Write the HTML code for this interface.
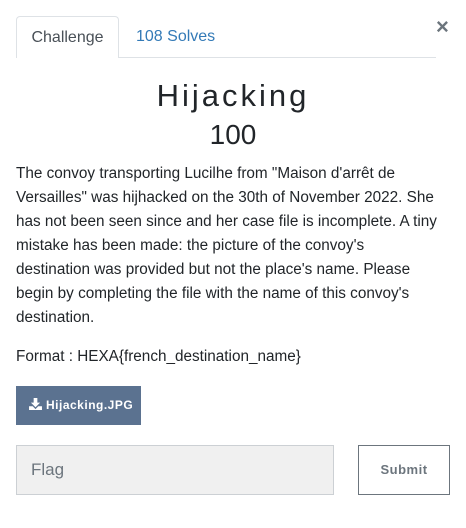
<!DOCTYPE html>
<html><head><style>
body{margin:0;width:466px;height:528px;background:#fff;font-family:"Liberation Sans",sans-serif;color:#212529;position:relative;overflow:hidden}
.tab{position:absolute;top:16px;height:41px;font-size:16px;line-height:41px;box-sizing:border-box}
.t1{left:16px;width:103px;border:1px solid #dee2e6;border-bottom:none;border-radius:4px 4px 0 0;text-align:center;color:#495057;background:#fff;z-index:2;height:42px}
.t2{left:136px;color:#337ab7}
.line{position:absolute;left:16px;width:420px;top:57px;border-top:1px solid #dee2e6}
.x{position:absolute;left:436px;top:14px;font-size:22px;color:#6c757d;font-weight:bold}
h1{position:absolute;top:76px;left:0;width:466px;text-align:center;margin:0;font-weight:normal;font-size:31px;letter-spacing:3px;line-height:40px}
.pts{position:absolute;top:118px;left:0;width:466px;text-align:center;font-size:28px;line-height:34px}
.d{position:absolute;left:16px;top:162px;width:450px;font-size:15.3px;line-height:24px;margin:0;white-space:nowrap}
.f{position:absolute;left:16px;top:345px;font-size:15.3px;line-height:24px}
.btn{position:absolute;left:16px;top:386px;width:125px;height:39px;background:#5b7290;color:#fff;font-size:12px;font-weight:bold;line-height:39px;box-sizing:border-box;padding-left:13px;letter-spacing:.5px}
.in{position:absolute;left:16px;top:445px;width:318px;height:50px;background:#f0f0f0;border:1px solid #ccd0d4;box-sizing:border-box;padding-left:14px;line-height:48px;color:#6c757d;font-size:17px}
.sb{position:absolute;left:358px;top:445px;width:92px;height:50px;border:1px solid #6c757d;box-sizing:border-box;text-align:center;line-height:48px;color:#6c757d;font-weight:bold;font-size:13px;letter-spacing:.5px}
</style></head><body>
<div class="tab t1">Challenge</div>
<div class="tab t2">108 Solves</div>
<div class="line"></div>
<div class="x">×</div>
<h1>Hijacking</h1>
<div class="pts">100</div>
<p class="d">The convoy transporting Lucilhe from "Maison d'arrêt de<br>Versailles" was hijhacked on the 30th of November 2022. She<br>has not been seen since and her case file is incomplete. A tiny<br>mistake has been made: the picture of the convoy's<br>destination was provided but not the place's name. Please<br>begin by completing the file with the name of this convoy's<br>destination.</p>
<div class="f">Format : HEXA{french_destination_name}</div>
<div class="btn"><svg width="13" height="12" viewBox="0 0 14 13" style="vertical-align:-1px;margin-right:4px"><path d="M5 0h4v5h3l-5 5-5-5h3z" fill="#fff"/><path d="M0 9h4l3 3 3-3h4v4H0z" fill="#fff"/></svg>Hijacking.JPG</div>
<div class="in">Flag</div>
<div class="sb">Submit</div>
</body></html>
